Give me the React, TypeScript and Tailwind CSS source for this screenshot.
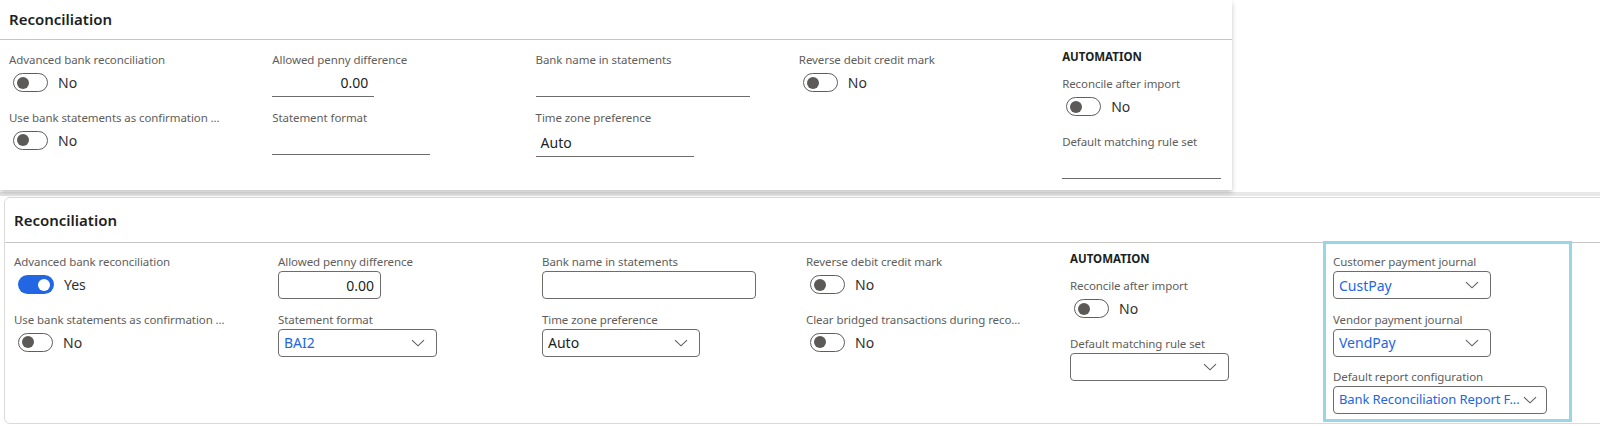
import React from "react";

function Label({ children }: { children: React.ReactNode }) {
  return (
    <div className="h-[16px] text-[11.5px] tracking-[-0.08px] leading-[16px] text-[#605e5c] whitespace-nowrap">
      {children}
    </div>
  );
}

function Toggle({ on }: { on?: boolean }) {
  if (on) {
    return (
      <div className="w-[36px] h-[19px] rounded-full bg-[#2266e3] flex items-center justify-end pr-[4px]">
        <div className="w-[12px] h-[12px] rounded-full bg-white" />
      </div>
    );
  }
  return (
    <div className="w-[35px] h-[19px] rounded-full border border-[#605e5c] bg-white flex items-center pl-[3px]">
      <div className="w-[12px] h-[12px] rounded-full bg-[#5c5a58]" />
    </div>
  );
}

function ToggleRow({ on, text }: { on?: boolean; text: string }) {
  return (
    <div className="h-[29px] flex items-center pl-[4px]">
      <Toggle on={on} />
      <span className="ml-[10px] text-[14px] text-[#323130]">{text}</span>
    </div>
  );
}

function Chevron() {
  return (
    <svg width="14" height="8" viewBox="0 0 14 8" className="shrink-0">
      <path d="M1 1.2L7 6.8L13 1.2" stroke="#605e5c" strokeWidth="1.1" fill="none" />
    </svg>
  );
}

function Field({ label, children }: { label: string; children: React.ReactNode }) {
  return (
    <div className="mb-[12.5px]">
      <Label>{label}</Label>
      {children}
    </div>
  );
}

function Heading() {
  return (
    <div className="-mt-[3px] mb-[11px] h-[16px] leading-[16px] text-[11.5px] font-bold text-[#201f1e]">
      AUTOMATION
    </div>
  );
}

function Box({ className, children }: { className: string; children?: React.ReactNode }) {
  return (
    <div className="h-[29px] pt-[1px]">
      <div
        className={
          "h-[28px] border border-[#6e6c6a] rounded-[4px] flex items-center pl-[5px] pr-[11px] text-[14px] " +
          className
        }
      >
        {children}
      </div>
    </div>
  );
}

function Select({
  className,
  value,
  blue,
  valueClass,
}: {
  className: string;
  value?: string;
  blue?: boolean;
  valueClass?: string;
}) {
  return (
    <Box className={className}>
      <span
        className={
          "flex-1 whitespace-nowrap overflow-hidden " +
          (blue ? "text-[#2266e3] " : "text-[#201f1e] ") +
          (valueClass || "")
        }
      >
        {value}
      </span>
      <Chevron />
    </Box>
  );
}

function Under({ className, children }: { className: string; children?: React.ReactNode }) {
  return (
    <div
      className={
        "h-[29px] border-b border-[#6e6c6a] flex items-center text-[14px] text-[#201f1e] " + className
      }
    >
      {children}
    </div>
  );
}

export default function App() {
  return (
    <div className="w-[1600px] h-[426px] overflow-hidden bg-white font-['Noto_Sans',sans-serif]">
      {/* Top panel */}
      <div className="w-[1232px] h-[190px] bg-white relative z-10 shadow-[0_3px_5px_rgba(0,0,0,0.22)]">
        <div className="h-[40px] border-b border-[#c8c6c4] pl-[9px] flex items-center">
          <span className="text-[15px] font-semibold text-[#201f1e]">Reconciliation</span>
        </div>
        <div className="flex pl-[9px] pt-[12px]">
          <div className="w-[263.5px]">
            <Field label="Advanced bank reconciliation">
              <ToggleRow text="No" />
            </Field>
            <Field label="Use bank statements as confirmation ...">
              <ToggleRow text="No" />
            </Field>
          </div>
          <div className="w-[263.5px]">
            <Field label="Allowed penny difference">
              <Under className="w-[102px] justify-end pr-[6px]">0.00</Under>
            </Field>
            <Field label="Statement format">
              <Under className="w-[158px]" />
            </Field>
          </div>
          <div className="w-[263.5px]">
            <Field label="Bank name in statements">
              <Under className="w-[214px]" />
            </Field>
            <Field label="Time zone preference">
              <Under className="w-[158px] pl-[5px] !h-[31px] pt-[4px]">Auto</Under>
            </Field>
          </div>
          <div className="w-[263.5px]">
            <Field label="Reverse debit credit mark">
              <ToggleRow text="No" />
            </Field>
          </div>
          <div className="w-[170px]">
            <Heading />
            <Field label="Reconcile after import">
              <ToggleRow text="No" />
            </Field>
            <Field label="Default matching rule set">
              <Under className="w-[159px]" />
            </Field>
          </div>
        </div>
      </div>

      {/* band between panels */}
      <div className="h-[7px] pt-[2px]">
        <div className="h-[4px] bg-[#e8e8e8]" />
      </div>

      {/* Bottom panel */}
      <div className="ml-[4px] w-[1620px] h-[227px] bg-white border border-[#dcdad8] rounded-[6px]">
        <div className="h-[45px] border-b border-[#c8c6c4] pl-[9px] flex items-center">
          <span className="text-[15px] font-semibold text-[#201f1e]">Reconciliation</span>
        </div>
        <div className="flex pl-[9px] h-[179px]">
          <div className="w-[264px] pt-[11px]">
            <Field label="Advanced bank reconciliation">
              <ToggleRow on text="Yes" />
            </Field>
            <Field label="Use bank statements as confirmation ...">
              <ToggleRow text="No" />
            </Field>
          </div>
          <div className="w-[264px] pt-[11px]">
            <Field label="Allowed penny difference">
              <Box className="w-[103px] justify-end !pr-[6px] text-[#201f1e]">0.00</Box>
            </Field>
            <Field label="Statement format">
              <Select className="w-[159px]" value="BAI2" blue />
            </Field>
          </div>
          <div className="w-[264px] pt-[11px]">
            <Field label="Bank name in statements">
              <Box className="w-[214px]" />
            </Field>
            <Field label="Time zone preference">
              <Select className="w-[158px]" value="Auto" />
            </Field>
          </div>
          <div className="w-[264px] pt-[11px]">
            <Field label="Reverse debit credit mark">
              <ToggleRow text="No" />
            </Field>
            <Field label="Clear bridged transactions during reco...">
              <ToggleRow text="No" />
            </Field>
          </div>
          <div className="w-[253px] pt-[11px]">
            <Heading />
            <Field label="Reconcile after import">
              <ToggleRow text="No" />
            </Field>
            <Field label="Default matching rule set">
              <Select className="w-[159px]" />
            </Field>
          </div>
          <div className="w-[249px] h-[181px] -mt-[2px] border-[3px] border-[#98d5e6] pl-[7px] pt-[10px]">
            <Field label="Customer payment journal">
              <Select className="w-[158px]" value="CustPay" blue />
            </Field>
            <Field label="Vendor payment journal">
              <Select className="w-[158px]" value="VendPay" blue />
            </Field>
            <Field label="Default report configuration">
              <Select
                className="w-[214px] !pr-[9px]"
                value="Bank Reconciliation Report F..."
                blue
                valueClass="text-[13px] tracking-[-0.1px]"
              />
            </Field>
          </div>
        </div>
      </div>
    </div>
  );
}
